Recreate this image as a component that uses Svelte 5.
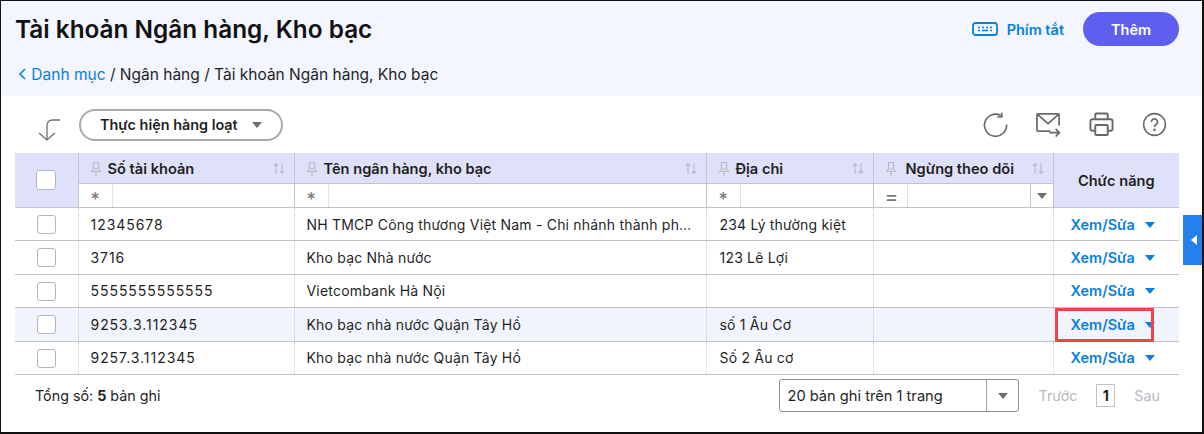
<script>
  let rows = [
    { acc: "12345678", bank: "NH TMCP Công thương Việt Nam - Chi nhánh thành phố Hà Nội", addr: "234 Lý thường kiệt" },
    { acc: "3716", bank: "Kho bạc Nhà nước", addr: "123 Lê Lợi" },
    { acc: "5555555555555", bank: "Vietcombank Hà Nội", addr: "" },
    { acc: "9253.3.112345", bank: "Kho bạc nhà nước Quận Tây Hồ", addr: "số 1 Âu Cơ", active: true },
    { acc: "9257.3.112345", bank: "Kho bạc nhà nước Quận Tây Hồ", addr: "Số 2 Âu cơ" },
  ];
  let cols = [
    { name: "Số tài khoản", op: "*" },
    { name: "Tên ngân hàng, kho bạc", op: "*" },
    { name: "Địa chỉ", op: "*" },
    { name: "Ngừng theo dõi", op: "=", select: true },
  ];
</script>

{#snippet pin()}
  <svg class="pin" width="12" height="16" viewBox="0 0 12 16" fill="none" stroke="#bcbcc4" stroke-width="1.2">
    <path d="M3.5 1.5h5v6.5h-5zM1.5 10.5l2-2.5h5l2 2.5zM6 10.5v4.5" />
  </svg>
{/snippet}

{#snippet sort()}
  <svg class="sort" width="12" height="13" viewBox="0 0 12 13" fill="none" stroke="#b9b9c2" stroke-width="1.1">
    <path d="M3 12V1.500M.8 3.800 3 1.500l2.200 2.300M9 1v10.500M6.800 9.200 9 11.500l2.200-2.300" />
  </svg>
{/snippet}

<div class="page">
  <header class="head">
    <div class="head-top">
      <h1>Tài khoản Ngân hàng, Kho bạc</h1>
      <div class="head-actions">
        <span class="shortcut">
          <svg width="26" height="14" viewBox="0 0 26 14" fill="none" stroke="#0a7fdc">
            <rect x="1" y="1" width="24" height="12" rx="2.500" stroke-width="1.800" />
            <path d="M6 5.500h2M10 5.500h2M14 5.500h2M18 5.500h2M6 8.500h2M10 8.500h6M18 8.500h2" stroke-width="1.300" />
          </svg>
          Phím tắt
        </span>
        <button class="add">Thêm</button>
      </div>
    </div>
    <nav class="crumbs">
      <svg width="9" height="12" viewBox="0 0 9 12" fill="none" stroke="#0a7fdc" stroke-width="1.600"><path d="M7 1 2 6l5 5" /></svg>
      <span class="link">Danh mục</span> / Ngân hàng / Tài khoản Ngân hàng, Kho bạc
    </nav>
  </header>

  <div class="toolbar">
    <svg class="batch-icon" width="24" height="24" viewBox="0 0 24 24" fill="none" stroke="#6f6f6f" stroke-width="1.300">
      <path d="M22 2h-7q-6 0-6 6v14M1 15l8 7 8-7" />
    </svg>
    <button class="batch">Thực hiện hàng loạt <i class="tri"></i></button>
    <div class="tools">
      <svg width="25" height="25" viewBox="0 0 26 26" fill="none" stroke="#696969" stroke-width="1.700">
        <path d="M18.500 3.600A11.500 11.500 0 1 0 24.500 13M19.500 .8v4.400h-4.600" />
      </svg>
      <svg width="25" height="25" viewBox="0 0 26 26" fill="none" stroke="#696969" stroke-width="1.800">
        <path d="M15 20H2a1 1 0 0 1-1-1V3a1 1 0 0 1 1-1h21a1 1 0 0 1 1 1v11M1.500 2.500 12.500 12l11-9.500M14 21.500h10M20.500 17.500l3.800 4-3.800 4" />
      </svg>
      <svg width="25" height="25" viewBox="0 0 26 26" fill="none" stroke="#696969" stroke-width="2">
        <path d="M6.500 7.500V2.500a1 1 0 0 1 1-1h11a1 1 0 0 1 1 1v5M6.500 19.500H3.500a2 2 0 0 1-2-2v-8a2 2 0 0 1 2-2h19a2 2 0 0 1 2 2v8a2 2 0 0 1-2 2h-3" />
        <rect x="6.500" y="13.500" width="13" height="10.500" rx="1" />
      </svg>
      <svg width="25" height="25" viewBox="0 0 26 26" fill="none" stroke="#696969" stroke-width="1.600">
        <circle cx="13" cy="13" r="11.300" />
        <path d="M9.800 10.300a3.200 3.200 0 1 1 4.800 2.800c-1 .6-1.600 1.200-1.600 2.400" stroke-width="1.800" />
        <circle cx="13" cy="18.500" r=".6" />
      </svg>
    </div>
  </div>

  <div class="table-wrap">
    <table>
      <colgroup>
        <col style="width: 63px" />
        <col style="width: 216px" />
        <col style="width: 412px" />
        <col style="width: 167px" />
        <col style="width: 180px" />
        <col style="width: 126px" />
      </colgroup>
      <thead>
        <tr class="titles">
          <th rowspan="2" class="check-head"><span class="check big"></span></th>
          {#each cols as c}
            <th class="title">
              <div class="title-in">{@render pin()}<span class="name">{c.name}</span>{@render sort()}</div>
            </th>
          {/each}
          <th rowspan="2" class="fn-head">Chức năng</th>
        </tr>
        <tr class="filters">
          {#each cols as c}
            <th>
              <div class="filter">
                <span class="op" class:eq={c.select}>{c.op}</span>
                <span class="input"></span>
                {#if c.select}<span class="drop"><i class="tri small"></i></span>{/if}
              </div>
            </th>
          {/each}
        </tr>
      </thead>
      <tbody>
        {#each rows as r}
          <tr class:active={r.active}>
            <td class="c"><span class="check"></span></td>
            <td class="acc">{r.acc}</td>
            <td><div class="clip">{r.bank}</div></td>
            <td class="addr">{r.addr}</td>
            <td></td>
            <td class="fn">
              <span class="edit">Xem/Sửa</span><i class="tri blue"></i>
              {#if r.active}<span class="mark"></span>{/if}
            </td>
          </tr>
        {/each}
      </tbody>
    </table>
  </div>

  <footer class="foot">
    <div>Tổng số: <b>5</b> bản ghi</div>
    <div class="pager">
      <div class="size"><span>20 bản ghi trên 1 trang</span><span class="size-drop"><i class="tri"></i></span></div>
      <span class="off">Trước</span>
      <span class="num">1</span>
      <span class="off">Sau</span>
    </div>
  </footer>

  <div class="side-tab"><i></i></div>
</div>

<style>
  :global(body) {
    margin: 0;
    font-family: Inter, "Noto Sans", sans-serif;
    color: #1f1f1f;
  }

  .page {
    position: relative;
    box-sizing: border-box;
    width: 1204px;
    height: 434px;
    border: 1px solid #111;
    border-width: 1px 2px 2px 1px;
    font-size: 14px;
    overflow: hidden;
    background: #fff;
  }

  .head {
    background: #f3f5ff;
    height: 95px;
    box-sizing: border-box;
    padding: 11px 23px 0 14px;
  }

  .head-top {
    display: flex;
    justify-content: space-between;
    align-items: center;
    height: 34px;
  }

  h1 {
    margin: 0;
    font-size: 24.350px;
    font-weight: 600;
    color: #111;
  }

  .head-actions {
    display: flex;
    align-items: center;
    gap: 19px;
  }

  .shortcut {
    display: flex;
    align-items: center;
    gap: 9px;
    color: #0a7fdc;
    font-weight: 600;
    font-size: 14.500px;
  }

  .add {
    width: 96px;
    height: 34px;
    border: none;
    border-radius: 17px;
    background: #5e5fee;
    color: #fff;
    font: 600 14.500px Inter, sans-serif;
  }

  .crumbs {
    margin-top: 19px;
    padding-left: 3px;
    font-size: 15.500px;
    line-height: 20px;
    display: block;
  }

  .crumbs svg {
    margin-right: 0;
  }

  .link {
    color: #0a7fdc;
  }

  .toolbar {
    display: flex;
    align-items: center;
    height: 57px;
    padding: 0 12px 0 37px;
    margin-right: 0;
  }

  .batch-icon {
    margin-right: 17px;
    margin-top: 11px;
  }

  .batch {
    display: flex;
    align-items: center;
    gap: 14px;
    height: 32px;
    width: 204px;
    box-sizing: border-box;
    padding: 0 19px 0 19px;
    background: #fff;
    border: 2px solid #a9a9b2;
    border-radius: 16px;
    font: 600 14.400px Inter, sans-serif;
    color: #1f1f1f;
  }

  .tools {
    margin-left: auto;
    margin-right: 23px;
    display: flex;
    gap: 28px;
  }

  .tri {
    display: inline-block;
    width: 0;
    height: 0;
    border-left: 5px solid transparent;
    border-right: 5px solid transparent;
    border-top: 6px solid #6f6f6f;
  }

  .table-wrap {
    padding-left: 14px;
  }

  table {
    table-layout: fixed;
    border-collapse: collapse;
    width: 1164px;
  }

  th {
    padding: 0;
    font-weight: 600;
    text-align: left;
    font-size: 14.600px;
  }

  .check-head, .fn-head {
    background: #dfe0fa;
    border-bottom: 1px solid #c3c3cf;
  }

  .check-head {
    text-align: center;
    vertical-align: middle;
    border-right: 1px solid #c3c3cf;
  }

  .fn-head {
    text-align: center;
    padding-top: 2px;
  }

  .title {
    background: #dfe0fa;
    height: 30px;
    border-bottom: 1px solid #c3c3cf;
    border-right: 1px solid #c3c3cf;
  }

  .title-in {
    display: flex;
    align-items: center;
    box-sizing: border-box;
    padding: 1px 9px 0 11px;
    height: 30px;
  }

  .name {
    margin-left: 6px;
    flex: 1;
    white-space: nowrap;
  }

  .title:nth-child(5) .name {
    margin-left: 9px;
  }

  .filters th {
    height: 23px;
    background: #fff;
    border-bottom: 1px solid #c3c3cf;
    border-right: 1px solid #c3c3cf;
  }

  .filter {
    display: flex;
    height: 23px;
    align-items: center;
  }

  .op {
    width: 34px;
    height: 23px;
    box-sizing: border-box;
    padding: 8px 0 0 12px;
    font-size: 18px;
    line-height: 15px;
    color: #7a7a7a;
    border-right: 1px dotted #c9c9d2;
    font-weight: 500;
  }

  .op.eq {
    font-size: 21px;
    font-weight: 400;
    line-height: 23px;
    padding: 1px 0 0 11px;
  }

  .input {
    flex: 1;
  }

  .drop {
    width: 23px;
    height: 23px;
    box-sizing: border-box;
    border-left: 1px solid #c3c3cf;
    display: flex;
    align-items: center;
    justify-content: center;
  }

  .check {
    display: inline-block;
    box-sizing: border-box;
    width: 19px;
    height: 19px;
    border: 1px solid #b5b5c2;
    border-radius: 3px;
    background: #fff;
    vertical-align: middle;
  }

  .check.big {
    width: 20px;
    height: 20px;
  }

  td {
    height: 33.400px;
    padding: 0 12px;
    box-sizing: border-box;
    border-bottom: 1px solid #c3c3cf;
    border-right: 1px dotted #c9c9d2;
    font-size: 14px;
    white-space: nowrap;
    letter-spacing: 0.2px;
  }

  td:last-child {
    border-right: none;
  }

  td.c {
    text-align: center;
  }

  td.acc {
    letter-spacing: 0.950px;
  }

  td.addr {
    padding-left: 13px;
  }

  .clip {
    overflow: hidden;
    text-overflow: ellipsis;
  }

  .active td {
    background: #f1f4fd;
  }

  .fn {
    position: relative;
    padding: 0 0 0 17px;
    letter-spacing: 0;
  }

  .edit {
    color: #0a7fdc;
    font-weight: 600;
    font-size: 14.500px;
    margin-right: 10px;
  }

  .tri.blue {
    border-top-color: #0a7fdc;
    vertical-align: 2px;
  }

  .mark {
    position: absolute;
    left: 1px;
    top: 0;
    width: 99px;
    height: 34px;
    box-sizing: border-box;
    border: 3px solid #f04249;
  }

  .foot {
    display: flex;
    justify-content: space-between;
    align-items: center;
    height: 42px;
    padding: 0 42px 0 34px;
    font-size: 14.300px;
  }

  .pager {
    display: flex;
    align-items: center;
  }

  .size {
    display: flex;
    align-items: center;
    justify-content: space-between;
    box-sizing: border-box;
    width: 240px;
    height: 33px;
    border: 1px solid #8f8f8f;
    border-radius: 3px;
    padding-left: 7px;
    margin-right: 19px;
    font-size: 14.650px;
  }

  .size-drop {
    width: 31px;
    height: 31px;
    border-left: 1px solid #a5a5a5;
    display: flex;
    align-items: center;
    justify-content: center;
  }

  .off {
    color: #b9b9c0;
  }

  .num {
    box-sizing: border-box;
    width: 19px;
    height: 23px;
    border: 1px solid #c3c3cf;
    text-align: center;
    line-height: 21px;
    font-weight: 700;
    margin: 0 19px;
  }

  .side-tab {
    position: absolute;
    right: -2px;
    top: 214px;
    width: 21px;
    height: 50px;
    background: #2680eb;
    display: flex;
    align-items: center;
    justify-content: center;
  }

  .side-tab i {
    border-top: 5px solid transparent;
    border-bottom: 5px solid transparent;
    border-right: 6px solid #fff;
  }
</style>
